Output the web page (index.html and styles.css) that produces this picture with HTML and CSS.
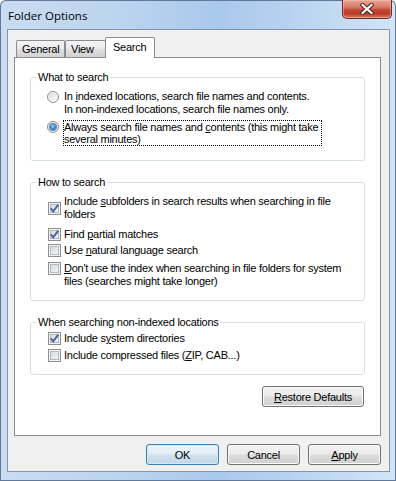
FILE: index.html
```html
<!DOCTYPE html>
<html lang="en">
<head>
    <meta charset="UTF-8">
    <meta name="viewport" content="width=device-width, initial-scale=1.0">
    <title>Folder Options</title>
    <link rel="stylesheet" href="styles.css">
</head>
<body>
    <div class="window">
        <div class="titlebar">
            <div class="title">Folder Options</div>
            <div class="closebtn">
                <svg width="14" height="12" viewBox="0 0 14 12">
                    <path d="M2.5 2 L11.5 10 M11.5 2 L2.5 10" stroke="#4a2620" stroke-width="4.2" stroke-linecap="square" fill="none"/>
                    <path d="M2.5 2 L11.5 10 M11.5 2 L2.5 10" stroke="#ffffff" stroke-width="2.2" stroke-linecap="square" fill="none"/>
                </svg>
            </div>
        </div>

        <div class="client">
            <div class="tabs">
                <div class="tab t-general">General</div>
                <div class="tab t-view">View</div>
                <div class="tab active">Search</div>
            </div>

            <div class="panel">
                <fieldset class="group g-what">
                    <legend>What to search</legend>
                    <div class="opts">
                        <div class="opt">
                            <span class="radio"></span>
                            <span class="lbl">In <u>i</u>ndexed locations, search file names and contents.<br>In non-indexed locations, search file names only.</span>
                        </div>
                        <div class="opt opt-focus">
                            <span class="radio on"><span class="dot"></span></span>
                            <span class="lbl focus">Always search file names and <u>c</u>ontents (this might take<br>several minutes)</span>
                        </div>
                    </div>
                </fieldset>

                <fieldset class="group g-how">
                    <legend>How to search</legend>
                    <div class="opts">
                        <div class="opt mid">
                            <span class="check"><svg width="11" height="11" viewBox="0 0 11 11"><path d="M1.8 5.2 L4.2 8.4 L9.3 1.6" stroke="#4d62a0" stroke-width="1.9" fill="none"/></svg></span>
                            <span class="lbl">Include <u>s</u>ubfolders in search results when searching in file<br>folders</span>
                        </div>
                        <div class="opt h2">
                            <span class="check"><svg width="11" height="11" viewBox="0 0 11 11"><path d="M1.8 5.2 L4.2 8.4 L9.3 1.6" stroke="#4d62a0" stroke-width="1.9" fill="none"/></svg></span>
                            <span class="lbl">Find <u>p</u>artial matches</span>
                        </div>
                        <div class="opt h3">
                            <span class="check"></span>
                            <span class="lbl">Use <u>n</u>atural language search</span>
                        </div>
                        <div class="opt h4">
                            <span class="check"></span>
                            <span class="lbl"><u>D</u>on't use the index when searching in file folders for system<br>files (searches might take longer)</span>
                        </div>
                    </div>
                </fieldset>

                <fieldset class="group g-non">
                    <legend>When searching non-indexed locations</legend>
                    <div class="opts">
                        <div class="opt">
                            <span class="check"><svg width="11" height="11" viewBox="0 0 11 11"><path d="M1.8 5.2 L4.2 8.4 L9.3 1.6" stroke="#4d62a0" stroke-width="1.9" fill="none"/></svg></span>
                            <span class="lbl">Include s<u>y</u>stem directories</span>
                        </div>
                        <div class="opt n2">
                            <span class="check"></span>
                            <span class="lbl">Include compressed files (<u>Z</u>IP, CAB...)</span>
                        </div>
                    </div>
                </fieldset>

                <div class="restore-row">
                    <button class="btn restore"><u>R</u>estore Defaults</button>
                </div>
            </div>

            <div class="buttons">
                <button class="btn default">OK</button>
                <button class="btn">Cancel</button>
                <button class="btn"><u>A</u>pply</button>
            </div>
        </div>
    </div>
</body>
</html>
```

FILE: styles.css
```css
*{
    box-sizing: border-box;
}
body{
    margin: 0;
    width: 396px;
    height: 481px;
    overflow: hidden;
    background: #ffffff;
    font-family: "Liberation Sans", Arial, sans-serif;
    font-size: 11px;
    letter-spacing: -0.25px;
    color: #000000;
}
.window{
    width: 396px;
    height: 481px;
    border-radius: 6px 6px 0 0;
    background: linear-gradient(to right, #cadcf1 0%, #bcd4ef 30%, #a9c9ec 55%, #b9d3f0 75%, #d3e4f6 100%);
    box-shadow: inset 0 0 0 1px #62789a;
}

/* title bar */
.titlebar{
    height: 29px;
    display: flex;
    justify-content: space-between;
    align-items: flex-start;
}
.title{
    padding: 8px 0 0 8px;
    font-family: "Open Sans", "Noto Sans", sans-serif;
    font-size: 11.5px;
    letter-spacing: 0;
    line-height: 16px;
    color: #000000;
}
.closebtn{
    width: 50px;
    height: 19px;
    margin-right: 4px;
    border: 1px solid #6d2a20;
    border-top: none;
    border-radius: 0 0 5px 5px;
    background: linear-gradient(#e9a595 0%, #d77a66 40%, #c24a35 55%, #b93a26 75%, #d67a64 100%);
    box-shadow: inset 0 0 0 1px rgba(255, 200, 190, 0.5);
    display: flex;
    align-items: center;
    justify-content: center;
}

/* client area */
.client{
    width: 383px;
    height: 443px;
    margin-left: 7px;
    border: 1px solid #8395ad;
    background: #f0f0f0;
}
.tabs{
    display: flex;
    align-items: flex-end;
    height: 27px;
    padding: 7px 0 0 8px;
}
.tab{
    height: 17px;
    padding: 1px 0 0 5px;
    line-height: 14px;
    border: 1px solid #898c95;
    border-bottom: none;
    border-radius: 2px 2px 0 0;
    background: linear-gradient(#f4f4f4 0%, #ececec 45%, #dedede 55%, #d3d3d3 100%);
}
.t-general{
    width: 49px;
}
.t-view{
    width: 41px;
}
.tab.active{
    position: relative;
    z-index: 1;
    width: 50px;
    height: 21px;
    margin-left: -1px;
    margin-bottom: -1px;
    padding: 2px 0 0 7px;
    background: #ffffff;
}
.panel{
    width: 367px;
    height: 379px;
    margin-left: 6px;
    padding: 0 15px;
    background: #ffffff;
    border: 1px solid #898c95;
}

/* group boxes */
.group{
    margin: 0;
    padding: 0;
    border: 1px solid #d5dfe5;
    border-radius: 3px;
    min-width: 0;
}
.group legend{
    margin-left: 5px;
    padding: 0 2px;
    line-height: 12px;
}
.g-what{
    margin-top: 13px;
}
.g-what .opts{
    padding: 7px 0 14px 16px;
}
.g-how{
    margin-top: 15px;
}
.g-how .opts{
    padding: 7px 0 12px 16px;
}
.g-non{
    margin-top: 15px;
}
.g-non .opts{
    padding: 4px 0 12px 16px;
}
.opt{
    display: flex;
    align-items: flex-start;
    line-height: 13px;
    white-space: nowrap;
}
.opt.mid{
    align-items: center;
}
.opt-focus{
    margin-top: 4px;
}
.h2{
    margin-top: 7px;
}
.h3{
    margin-top: 3px;
}
.h4{
    margin-top: 5px;
}
.n2{
    margin-top: 4px;
}
.lbl.focus{
    line-height: 12px;
    border: 1px dotted #000000;
    margin-left: -1px;
    padding-right: 3px;
}

/* radio */
.radio{
    flex: none;
    width: 12px;
    height: 12px;
    margin: 1px 5px 0 0;
    border: 1px solid #8e8f8f;
    border-radius: 50%;
    background: linear-gradient(135deg, #d6d6d6 0%, #eeeeee 55%, #fcfcfc 100%);
    box-shadow: inset 0 0 0 1px #f6f6f6;
    display: flex;
    align-items: center;
    justify-content: center;
}
.radio .dot{
    width: 6px;
    height: 6px;
    border-radius: 50%;
    background: radial-gradient(circle at 45% 40%, #a9dcff 0%, #3c8fd8 45%, #0f4f8f 100%);
    box-shadow: 0 0 0 1px #6585a8;
}

/* checkbox */
.check{
    flex: none;
    width: 13px;
    height: 13px;
    margin: 0 3px 0 1px;
    border: 1px solid #8e8f8f;
    background: linear-gradient(135deg, #cdd1d6 0%, #e6e8ea 50%, #f8f8f8 100%);
    box-shadow: inset 0 0 0 1px #f4f4f4, inset 0 0 0 2px #b4b9bf;
    display: flex;
    align-items: center;
    justify-content: center;
}
.check svg{
    display: block;
}

/* buttons */
.btn{
    font-family: "Liberation Sans", Arial, sans-serif;
    font-size: 11px;
    letter-spacing: -0.25px;
    color: #000000;
    width: 73px;
    height: 21px;
    padding: 0;
    border: 1px solid #707070;
    border-radius: 3px;
    background: linear-gradient(#f2f2f2 0%, #ebebeb 48%, #dddddd 52%, #cfcfcf 100%);
    box-shadow: inset 0 0 0 1px #fbfbfb;
}
.btn.default{
    border-color: #3c7fb1;
    background: linear-gradient(#eef5fa 0%, #e2edf5 48%, #d2e2ee 52%, #c3d6e4 100%);
    box-shadow: inset 0 0 0 1px #d0ecfb;
}
.restore-row{
    display: flex;
    justify-content: flex-end;
    margin-top: 11px;
    padding-right: 1px;
}
.btn.restore{
    width: 102px;
}
.buttons{
    display: flex;
    justify-content: flex-end;
    gap: 8px;
    margin-top: 8px;
    padding-right: 8px;
}
```
